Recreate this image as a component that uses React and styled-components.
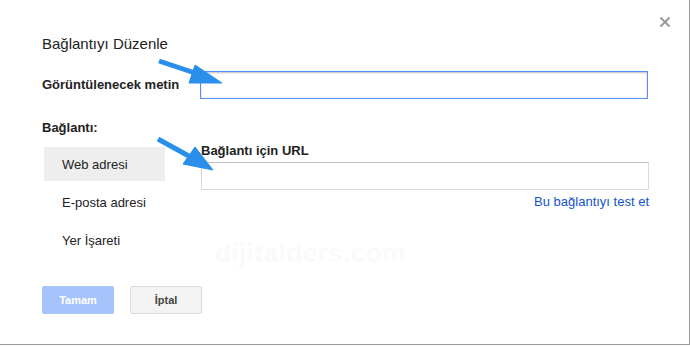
import React from "react";
import styled, { createGlobalStyle } from "styled-components";

const GlobalStyle = createGlobalStyle`
  html, body {
    margin: 0;
    padding: 0;
    background: #fff;
  }
  body {
    font-family: "Liberation Sans", Arial, sans-serif;
    color: #222;
  }
`;

const DialogWapper = styled.div`
  position: relative;
  box-sizing: border-box;
  width: 690px;
  height: 345px;
  padding: 34px 0 0 42px;
  background: #fff;
  border-right: 1px solid #9a9a9a;
  border-bottom: 1px solid #9a9a9a;
  box-shadow: 0 1px 0 #dcdcdc;
`;

const Title = styled.div`
  font-size: 15px;
  line-height: 20px;
  color: #222;
`;

const CloseBtn = styled.div`
  position: absolute;
  top: 16px;
  right: 18px;
  width: 12px;
  height: 12px;
  display: flex;
`;

const FieldRow = styled.div`
  display: flex;
  align-items: center;
  margin-top: 17px;
`;

const Label = styled.div`
  font-size: 13px;
  font-weight: bold;
  line-height: 16px;
  color: #222;
  width: ${(props) => props.width || "auto"};
`;

const TextInput = styled.div`
  box-sizing: border-box;
  width: 448px;
  height: 28px;
  background: #fff;
  border: 1px solid ${(props) => (props.focused ? "#4d90fe" : "#d9d9d9")};
  border-top-color: ${(props) => (props.focused ? "#4d90fe" : "#c0c0c0")};
  box-shadow: ${(props) =>
    props.focused ? "inset 0 1px 2px rgba(0,0,0,0.25)" : "none"};
`;

const Section = styled.div`
  margin-top: 21px;
`;

const Body = styled.div`
  display: flex;
  align-items: flex-start;
  margin-top: 7px;
`;

const Nav = styled.div`
  display: flex;
  flex-direction: column;
  gap: 4px;
  width: 121px;
  margin: 4px 0 0 2px;
`;

const NavItem = styled.div`
  height: 34px;
  display: flex;
  align-items: center;
  padding-left: 18px;
  font-size: 13px;
  color: #222;
  background: ${(props) => (props.active ? "#eeeeee" : "transparent")};
`;

const RightCol = styled.div`
  display: flex;
  flex-direction: column;
  margin-left: 36px;
  width: 448px;
  & > ${TextInput} {
    margin-top: 3px;
  }
`;

const TestLink = styled.div`
  align-self: flex-end;
  margin-top: 4px;
  font-size: 13px;
  line-height: 16px;
  color: #1155cc;
`;

const ButtonBar = styled.div`
  display: flex;
  gap: 16px;
  margin-top: 29px;
`;

const Button = styled.div`
  box-sizing: border-box;
  width: 72px;
  height: 28px;
  display: flex;
  align-items: center;
  justify-content: center;
  border-radius: 2px;
  font-size: 11px;
  font-weight: bold;
  border: 1px solid ${(props) => (props.primary ? "#a9c6fa" : "#dcdcdc")};
  background: ${(props) => (props.primary ? "#a6c4fb" : "#f3f3f3")};
  color: ${(props) => (props.primary ? "#fff" : "#444")};
`;

const Watermark = styled.div`
  position: absolute;
  left: 215px;
  top: 238px;
  font-size: 26px;
  font-weight: bold;
  letter-spacing: 0.5px;
  color: #fafafa;
  pointer-events: none;
`;

const Arrows = styled.svg`
  position: absolute;
  left: 0;
  top: 0;
  pointer-events: none;
`;

const App = () => {
  return (
    <>
      <GlobalStyle />
      <DialogWapper>
        <Title>Bağlantıyı Düzenle</Title>
        <CloseBtn>
          <svg width="12" height="12" viewBox="0 0 12 12">
            <path
              d="M1.5 1.5 L10.5 10.5 M10.5 1.5 L1.5 10.5"
              stroke="#999"
              strokeWidth="2"
            />
          </svg>
        </CloseBtn>
        <FieldRow>
          <Label width="158px">Görüntülenecek metin</Label>
          <TextInput focused />
        </FieldRow>
        <Section>
          <Label>Bağlantı:</Label>
        </Section>
        <Body>
          <Nav>
            <NavItem active>Web adresi</NavItem>
            <NavItem>E-posta adresi</NavItem>
            <NavItem>Yer İşareti</NavItem>
          </Nav>
          <RightCol>
            <Label>Bağlantı için URL</Label>
            <TextInput />
            <TestLink>Bu bağlantıyı test et</TestLink>
          </RightCol>
        </Body>
        <ButtonBar>
          <Button primary>Tamam</Button>
          <Button>İptal</Button>
        </ButtonBar>
        <Watermark>dijitalders.com</Watermark>
        <Arrows width="690" height="345">
          <g fill="#2a8fea" stroke="#2a8fea">
            <line x1="159" y1="61" x2="201" y2="75" strokeWidth="5" />
            <polygon points="195,65 222,83 189,83" strokeWidth="1" />
            <line x1="158" y1="139" x2="196" y2="160" strokeWidth="5" />
            <polygon points="195,147 213,170 183,164" strokeWidth="1" />
          </g>
        </Arrows>
      </DialogWapper>
    </>
  );
};

export default App;
